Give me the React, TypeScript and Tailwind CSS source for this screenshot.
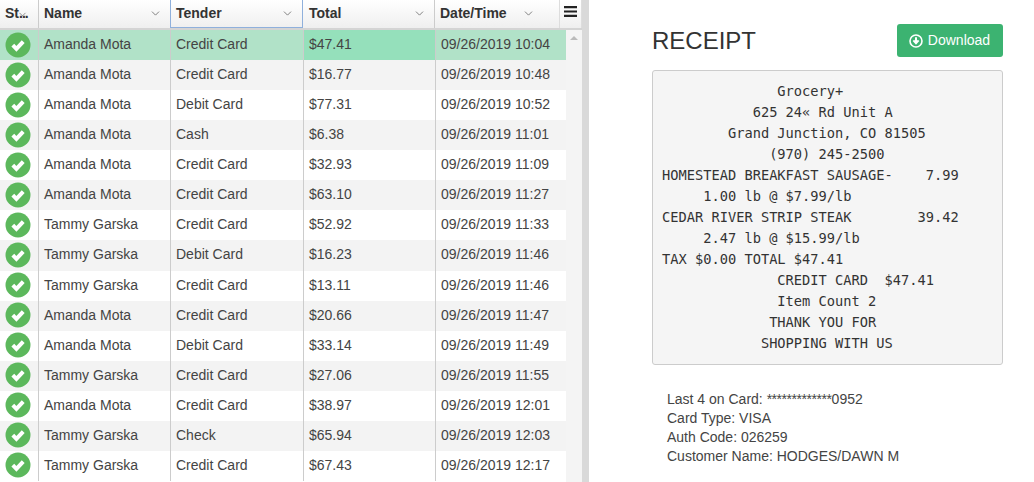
import { ChevronDown } from 'lucide-react';

const rows = [
  ['Amanda Mota', 'Credit Card', '$47.41', '09/26/2019 10:04'],
  ['Amanda Mota', 'Credit Card', '$16.77', '09/26/2019 10:48'],
  ['Amanda Mota', 'Debit Card', '$77.31', '09/26/2019 10:52'],
  ['Amanda Mota', 'Cash', '$6.38', '09/26/2019 11:01'],
  ['Amanda Mota', 'Credit Card', '$32.93', '09/26/2019 11:09'],
  ['Amanda Mota', 'Credit Card', '$63.10', '09/26/2019 11:27'],
  ['Tammy Garska', 'Credit Card', '$52.92', '09/26/2019 11:33'],
  ['Tammy Garska', 'Debit Card', '$16.23', '09/26/2019 11:46'],
  ['Tammy Garska', 'Credit Card', '$13.11', '09/26/2019 11:46'],
  ['Amanda Mota', 'Credit Card', '$20.66', '09/26/2019 11:47'],
  ['Amanda Mota', 'Debit Card', '$33.14', '09/26/2019 11:49'],
  ['Tammy Garska', 'Credit Card', '$27.06', '09/26/2019 11:55'],
  ['Amanda Mota', 'Credit Card', '$38.97', '09/26/2019 12:01'],
  ['Tammy Garska', 'Check', '$65.94', '09/26/2019 12:03'],
  ['Tammy Garska', 'Credit Card', '$67.43', '09/26/2019 12:17'],
];

const receipt = `              Grocery+
           625 24« Rd Unit A
        Grand Junction, CO 81505
             (970) 245-2500
HOMESTEAD BREAKFAST SAUSAGE-    7.99
     1.00 lb @ $7.99/lb
CEDAR RIVER STRIP STEAK        39.42
     2.47 lb @ $15.99/lb
TAX $0.00 TOTAL $47.41
              CREDIT CARD  $47.41
              Item Count 2
             THANK YOU FOR
            SHOPPING WITH US`;

function StatusIcon() {
  return (
    <svg width="26" height="26" viewBox="0 0 26 26">
      <circle cx="13" cy="13" r="12.5" fill="#5cb85c" />
      <path d="M7.8 13.2l3.6 3.6 6.8-7.2" fill="none" stroke="#fff" strokeWidth="4" />
    </svg>
  );
}

function DownloadIcon() {
  return (
    <svg width="14" height="14" viewBox="0 0 14 14">
      <circle cx="7" cy="7" r="6" fill="none" stroke="#fff" strokeWidth="1.6" />
      <path d="M7 3.2v5M4.4 6.4L7 9.2l2.6-2.8" fill="none" stroke="#fff" strokeWidth="2" />
    </svg>
  );
}

function MenuIcon() {
  return (
    <svg width="13" height="11" viewBox="0 0 13 11">
      <path d="M0 0h13v2.2H0zM0 4.4h13v2.2H0zM0 8.8h13V11H0z" fill="#222" />
    </svg>
  );
}

function HeaderCell({ label, className }: { label: string; className: string }) {
  return (
    <div className={`flex items-center justify-between pr-[8px] font-bold text-[#333] ${className}`}>
      <span>{label}</span>
      <ChevronDown className="h-[13px] w-[13px] text-[#666]" strokeWidth={1.5} />
    </div>
  );
}

export default function App() {
  return (
    <div className="flex h-[482px] w-[1034px] overflow-hidden bg-white font-['Liberation_Sans',sans-serif] text-[14px] text-[#333]">
      {/* Grid */}
      <div className="flex h-full w-[582px] shrink-0 flex-col">
        <div className="flex h-[30px] shrink-0 border-b-2 border-[#d4d4d4] bg-gradient-to-b from-white to-[#efefef]">
          <div className="relative flex w-[39px] shrink-0 items-center border-r border-[#ccc] pb-[1px] pl-[5px] font-bold">
            St<span className="tracking-[-1px]">..</span>.
            <ChevronDown className="absolute left-[17px] top-[9px] h-[11px] w-[11px] text-[#666]" strokeWidth={1.5} />
          </div>
          <HeaderCell label="Name" className="w-[131px] shrink-0 pb-[1px] pl-[5px]" />
          <HeaderCell label="Tender" className="w-[133px] shrink-0 border-x border-b border-[#8fb0dc] pl-[5px]" />
          <HeaderCell label="Total" className="w-[132px] shrink-0 border-r border-[#ccc] pb-[1px] pl-[6px]" />
          <div className="flex w-[124px] shrink-0 items-center gap-[15px] pb-[1px] pl-[5px] font-bold">
            <span>Date/Time</span>
            <ChevronDown className="h-[13px] w-[13px] text-[#666]" strokeWidth={1.5} />
          </div>
          <div className="flex flex-1 items-start justify-center border-x border-[#ddd] pt-[6px]">
            <MenuIcon />
          </div>
        </div>
        <div className="flex min-h-0 flex-1">
          <div className="w-[566px] shrink-0">
            {rows.map((r, i) => {
              const selected = i === 0;
              const stripe = i % 2 === 1 ? 'bg-[#f3f3f3]' : 'bg-white';
              return (
                <div key={i} className={`flex h-[30.075px] items-center text-[#444] ${selected ? 'bg-[#b1e2c8]' : stripe}`}>
                  <div className="flex h-full w-[39px] shrink-0 items-center border-r border-[#ccc] pb-[1px] pl-[5px]">
                    <StatusIcon />
                  </div>
                  <div className="flex h-full w-[132px] shrink-0 items-center border-r border-[#ccc] pb-[1px] pl-[5px]">{r[0]}</div>
                  <div className="flex h-full w-[133px] shrink-0 items-center border-r border-[#ccc] pb-[1px] pl-[5px]">{r[1]}</div>
                  <div className={`flex h-full w-[132px] shrink-0 items-center border-r border-[#ccc] pb-[1px] pl-[5px] ${selected ? 'bg-[#95e0bb]' : ''}`}>{r[2]}</div>
                  <div className="flex h-full flex-1 items-center pb-[1px] pl-[5px]">{r[3]}</div>
                </div>
              );
            })}
          </div>
          <div className="flex flex-1 justify-center bg-[#f4f4f4] pt-[6px]">
            <div className="h-0 w-0 border-x-[4px] border-b-[4px] border-x-transparent border-b-[#bbb]" />
          </div>
        </div>
      </div>

      {/* Splitter */}
      <div className="h-full w-[7px] shrink-0 bg-[#d9d9d9]" />

      {/* Receipt */}
      <div className="min-w-0 flex-1 pl-[63px] pr-[31px] pt-[24px]">
        <div className="flex h-[33px] items-center justify-between">
          <h1 className="pt-[1px] text-[24px] text-[#333]">RECEIPT</h1>
          <button className="flex h-[33px] w-[106px] items-center justify-center gap-[5px] rounded-[3px] bg-[#3cb371] pr-[1px] text-[14px] text-white">
            <DownloadIcon />
            Download
          </button>
        </div>
        <pre className="mt-[13px] h-[295px] rounded-[3px] border border-[#ccc] bg-[#f5f5f5] px-[9px] py-[10px] font-['DejaVu_Sans_Mono',monospace] text-[13.7px] leading-[21px] text-[#333]">
          {receipt}
        </pre>
        <div className="mt-[25px] pl-[15px] text-[14px] leading-[19px] text-[#444]">
          <div>
            Last 4 on Card: <span className="tracking-[-0.45px]">*************</span>0952
          </div>
          <div>Card Type: VISA</div>
          <div>Auth Code: 026259</div>
          <div>Customer Name: HODGES/DAWN M</div>
        </div>
      </div>
    </div>
  );
}
